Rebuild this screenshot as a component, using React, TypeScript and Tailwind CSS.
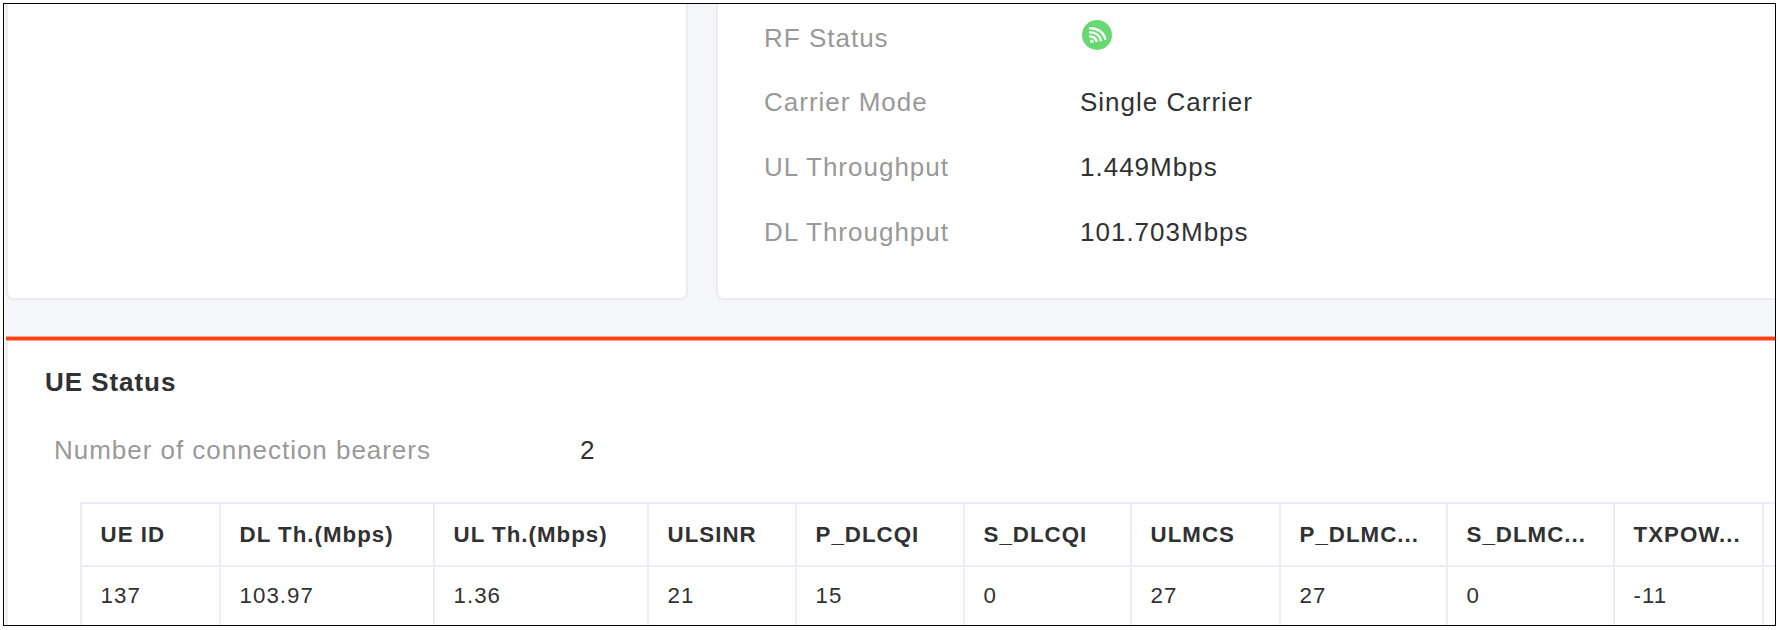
import React from "react";

const details = [
  { label: "RF Status", value: null, row: "h-[63px]" },
  { label: "Carrier Mode", value: "Single Carrier", row: "h-[64px]" },
  { label: "UL Throughput", value: "1.449Mbps", row: "h-[67px]" },
  { label: "DL Throughput", value: "101.703Mbps", row: "h-[63px]" },
];

const columns = [
  { title: "UE ID", value: "137", width: "w-[139px]" },
  { title: "DL Th.(Mbps)", value: "103.97", width: "w-[214px]" },
  { title: "UL Th.(Mbps)", value: "1.36", width: "w-[214px]" },
  { title: "ULSINR", value: "21", width: "w-[148px]" },
  { title: "P_DLCQI", value: "15", width: "w-[168px]" },
  { title: "S_DLCQI", value: "0", width: "w-[167px]" },
  { title: "ULMCS", value: "27", width: "w-[149px]" },
  { title: "P_DLMC...", value: "27", width: "w-[167px]" },
  { title: "S_DLMC...", value: "0", width: "w-[167px]" },
  { title: "TXPOW...", value: "-11", width: "w-[149px]" },
  { title: "", value: "", width: "w-[100px]" },
];

function SignalIcon() {
  return (
    <svg width="30" height="30" viewBox="0 0 30 30" fill="none" aria-label="RF on">
      <circle cx="15" cy="15" r="15" fill="#67d972" />
      <circle cx="9.8" cy="21.3" r="1.8" fill="#fff" />
      <g stroke="#fff" strokeWidth="2.4">
        <path d="M7.200 16.500c4-.3 6.900 1.700 7.500 5.500" />
        <path d="M7 12.300c6.500-.3 11 3.300 12.100 8.900" />
        <path d="M7 8.100c8.600-.3 14.800 4.200 16.500 11.600" />
      </g>
    </svg>
  );
}

function CellDetails() {
  return (
    <div className="h-[296px] flex-1 rounded-bl-lg border-b-2 border-l-2 border-[#ebeceb] bg-white pl-[46px] pt-[3px] text-[26px] tracking-[1px]">
      {details.map((d) => (
        <div key={d.label} className={`flex items-center ${d.row}`}>
          <span className="w-[316px] text-[#999999]">{d.label}</span>
          {d.value ? <span className="text-[#303133]">{d.value}</span> : <span className="mb-[8px] ml-[2px]"><SignalIcon /></span>}
        </div>
      ))}
    </div>
  );
}

function UeTable() {
  return (
    <div className="ml-[72px] mt-[32px] flex w-[1695px] overflow-hidden border-l-2 border-t-2 border-[#ebeef5] text-[22.3px] tracking-[1px] text-[#303133]">
      {columns.map((c, i) => (
        <div key={i} className={`shrink-0 border-r-2 border-[#ebeef5] ${c.width}`}>
          <div className="flex h-[63px] items-center whitespace-nowrap border-b-2 border-[#ebeef5] pl-[18.6px] pt-px font-bold">{c.title}</div>
          <div className="flex h-[70px] items-start pl-[18.6px] pt-[12px] leading-[34px]">{c.value}</div>
        </div>
      ))}
    </div>
  );
}

export default function App() {
  return (
    <div className="h-[630px] w-[1780px] bg-white pl-[3px] pt-[3px] font-['Liberation_Sans',Arial,sans-serif]">
      <div className="h-[623px] w-[1773px] overflow-hidden border border-black pl-px">
        <div className="flex h-[332px] gap-[28px] bg-[#f4f6fa]">
          <div className="h-[296px] w-[683px] rounded-b-lg border-b-2 border-l-[3px] border-r-2 border-[#ebeceb] bg-white" />
          <CellDetails />
        </div>
        <div className="ml-px h-[5px] border-y border-[#ffa68c] bg-[#ff4013]" />
        <div className="h-[300px] border-l-[3px] border-[#eeeeee] bg-white">
          <h2 className="ml-[37px] pt-[21px] text-[26px] font-bold leading-[40px] tracking-[0.95px] text-[#303133]">UE Status</h2>
          <div className="mt-[28px] flex pl-[46px] text-[26px] leading-[40px] tracking-[0.97px]">
            <span className="w-[526px] text-[#999999]">Number of connection bearers</span>
            <span className="text-[#303133]">2</span>
          </div>
          <UeTable />
        </div>
      </div>
    </div>
  );
}
